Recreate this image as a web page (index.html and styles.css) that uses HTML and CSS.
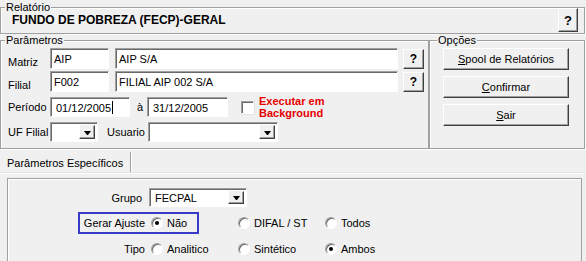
FILE: index.html
```html
<!DOCTYPE html>
<html lang="pt-BR">
<head>
    <meta charset="UTF-8">
    <title>Fundo de Pobreza (FECP) - Geral</title>
    <link rel="stylesheet" href="styles.css">
</head>
<body>
    <div class="window">
        <fieldset class="group group-report">
            <legend>Relatório</legend>
            <div class="report-row">
                <span class="report-title">FUNDO DE POBREZA (FECP)-GERAL</span>
                <button class="btn btn-help btn-help-lg">?</button>
            </div>
        </fieldset>

        <div class="main-row">
            <fieldset class="group group-params">
                <legend>Parâmetros</legend>
                <div class="params">
                    <div class="row row-tall">
                        <span class="lbl lbl-low">Matriz</span>
                        <div class="field w-code">AIP</div>
                        <div class="field w-name">AIP S/A</div>
                        <button class="btn btn-help">?</button>
                    </div>
                    <div class="row row-tall row-filial">
                        <span class="lbl lbl-low">Filial</span>
                        <div class="field w-code">F002</div>
                        <div class="field w-name">FILIAL AIP 002 S/A</div>
                        <button class="btn btn-help">?</button>
                    </div>
                    <div class="row row-periodo">
                        <span class="lbl">Período</span>
                        <div class="field field-date w-date">01/12/2005<span class="caret"></span></div>
                        <span class="lbl-a">à</span>
                        <div class="field field-date w-date2">31/12/2005</div>
                        <span class="check"></span>
                        <span class="background-text">Executar em<br>Background</span>
                    </div>
                    <div class="row row-uf">
                        <span class="lbl">UF Filial</span>
                        <div class="field combo w-uf"><span class="combo-text"></span><span class="drop"></span></div>
                        <span class="lbl-usuario">Usuario</span>
                        <div class="field combo w-usuario"><span class="combo-text"></span><span class="drop"></span></div>
                    </div>
                </div>
            </fieldset>

            <fieldset class="group group-options">
                <legend>Opções</legend>
                <div class="options">
                    <button class="btn btn-option"><u>S</u>pool de Relatórios</button>
                    <button class="btn btn-option"><u>C</u>onfirmar</button>
                    <button class="btn btn-option"><u>S</u>air</button>
                </div>
            </fieldset>
        </div>

        <div class="tabs">
            <span class="tab">Parâmetros Específicos</span>
        </div>

        <div class="tab-page">
            <div class="panel">
                <div class="spec-row spec-grupo">
                    <span class="spec-label">Grupo</span>
                    <div class="field combo w-grupo"><span class="combo-text">FECPAL</span><span class="drop"></span></div>
                </div>
                <div class="spec-row spec-ajuste">
                    <span class="spec-label">Gerar Ajuste</span>
                    <span class="opt"><span class="radio checked"></span>Não</span>
                    <span class="opt"><span class="radio"></span>DIFAL / ST</span>
                    <span class="opt"><span class="radio"></span>Todos</span>
                    <span class="mark"></span>
                </div>
                <div class="spec-row spec-tipo">
                    <span class="spec-label">Tipo</span>
                    <span class="opt"><span class="radio"></span>Analitico</span>
                    <span class="opt"><span class="radio"></span>Sintético</span>
                    <span class="opt"><span class="radio checked"></span>Ambos</span>
                </div>
            </div>
        </div>
    </div>
</body>
</html>
```

FILE: styles.css
```css
html, body {
    margin: 0;
    padding: 0;
    height: 261px;
    overflow: hidden;
}

body {
    background-color: #f0f0f0;
    font-family: "Liberation Sans", Arial, sans-serif;
    font-size: 11px;
    color: #000;
}

.window {
    width: 585px;
}

/* group boxes */
.group {
    margin: 0;
    padding: 0;
    min-width: 0;
    box-sizing: border-box;
    border: 1px solid #a0a0a0;
    box-shadow: 1px 1px 0 #fff, inset 1px 1px 0 #fff;
}

.group legend {
    padding: 0 1px;
    margin-left: 4px;
    line-height: 12px;
    background-color: #f0f0f0;
}

.group-report {
    margin-top: 1px;
    padding: 0 6px 1px 11px;
}

.group-report legend {
    margin-left: -7px;
}

.report-row {
    display: flex;
    align-items: center;
    height: 24px;
    margin-top: -5px;
}

.report-title {
    font-size: 12px;
    font-weight: bold;
}

.main-row {
    display: flex;
}

.group-params {
    width: 429px;
    padding: 2px 4px 6px 7px;
}

.group-options {
    width: 156px;
    padding: 2px 0 0 13px;
}

.group-options legend {
    margin-left: -6px;
}

.group-params legend {
    margin-left: -3px;
}

/* buttons */
.btn {
    font-family: inherit;
    font-size: 11px;
    color: #000;
    background-color: #f0f0f0;
    border: 1px solid;
    border-color: #fff #404040 #404040 #fff;
    box-shadow: inset -1px -1px 0 #a0a0a0;
    padding: 0;
    margin: 0;
}

.btn-help {
    width: 21px;
    height: 20px;
    margin-left: 5px;
    font-weight: bold;
    font-size: 12px;
}

.btn-help-lg {
    width: 20px;
    height: 24px;
    margin-left: auto;
    font-size: 13px;
}

.options {
    display: flex;
    flex-direction: column;
    gap: 6px;
}

.btn-option {
    width: 126px;
    height: 22px;
}

/* parameter rows */
.row {
    display: flex;
    align-items: center;
    height: 20px;
    margin-top: 5px;
}

.row-tall {
    height: 21px;
    margin-top: 0;
}

.row-filial {
    margin-top: 2px;
}

.lbl {
    width: 42px;
    flex-shrink: 0;
}

.lbl-low {
    align-self: flex-end;
    line-height: 13px;
}

.field {
    box-sizing: border-box;
    height: 100%;
    background-color: #fff;
    border: 1px solid;
    border-color: #a0a0a0 #fff #fff #a0a0a0;
    box-shadow: inset 1px 1px 0 #696969;
    padding: 1px 0 0 3px;
    display: flex;
    align-items: center;
    white-space: nowrap;
    flex-shrink: 0;
}

.w-code {
    width: 59px;
}

.w-name {
    width: 283px;
    margin-left: 6px;
}

.field-date {
    padding-left: 5px;
}

.w-date {
    width: 80px;
}

.w-date2 {
    width: 81px;
}

.caret {
    display: inline-block;
    width: 1px;
    height: 13px;
    background-color: #000;
    margin-left: 1px;
}

.lbl-a {
    margin: 0 4px 0 7px;
    width: 6px;
}

.check {
    box-sizing: border-box;
    width: 13px;
    height: 13px;
    margin-left: 13px;
    background-color: #fff;
    border: 1px solid;
    border-color: #a0a0a0 #fff #fff #a0a0a0;
    box-shadow: inset 1px 1px 0 #696969, 1px 1px 0 #e3e3e3;
    flex-shrink: 0;
}

.background-text {
    align-self: flex-start;
    margin: -2px 0 0 5px;
    line-height: 12px;
    color: #e60000;
    font-weight: bold;
    white-space: nowrap;
}

/* combo boxes */
.combo {
    padding: 2px 2px 2px 0;
    align-items: stretch;
}

.combo-text {
    flex: 1;
    display: flex;
    align-items: center;
    padding-left: 5px;
}

.drop {
    box-sizing: border-box;
    width: 16px;
    display: flex;
    align-items: center;
    justify-content: center;
    background-color: #f0f0f0;
    border: 1px solid;
    border-color: #f0f0f0 #404040 #404040 #fff;
    box-shadow: inset -1px -1px 0 #a0a0a0;
}

.drop::before {
    content: "";
    width: 1px;
    height: 0;
    border-left: 3px solid transparent;
    border-right: 3px solid transparent;
    border-top: 4px solid #000;
    margin-top: 1px;
}

.w-uf {
    width: 48px;
}

.lbl-usuario {
    width: 41px;
    margin-left: 9px;
    flex-shrink: 0;
}

.w-usuario {
    width: 130px;
}

/* tabs */
.tabs {
    display: flex;
    margin-top: 3px;
    height: 20px;
}

.tab {
    line-height: 22px;
    padding: 0 7px;
    border-right: 1px solid #a0a0a0;
    box-shadow: 1px 0 0 #fff;
}

.tab-page {
    margin-top: 1px;
    border-top: 1px solid #fff;
    box-shadow: 0 -1px 0 #e3e3e3;
    padding: 4px 3px 0 7px;
}

.panel {
    box-sizing: border-box;
    height: 83px;
    border: 1px solid #a0a0a0;
    border-bottom: 0;
    box-shadow: inset 1px 1px 0 #fff;
    padding-top: 9px;
}

.spec-row {
    position: relative;
    display: flex;
    align-items: center;
    height: 18px;
}

.spec-grupo {
    height: 19px;
}

.spec-ajuste {
    margin-top: 7px;
}

.spec-tipo {
    margin-top: 8px;
}

.spec-label {
    width: 137px;
    text-align: right;
    margin-right: 6px;
    flex-shrink: 0;
}

.spec-grupo .spec-label {
    width: 134px;
    margin-right: 7px;
}

.w-grupo {
    width: 98px;
}

.opt {
    width: 87px;
    display: flex;
    align-items: center;
    white-space: nowrap;
    flex-shrink: 0;
}

.radio {
    box-sizing: border-box;
    position: relative;
    width: 12px;
    height: 12px;
    margin-right: 4px;
    border-radius: 50%;
    background-color: #fff;
    border: 1px solid;
    border-color: #a0a0a0 #fff #fff #a0a0a0;
    box-shadow: inset 1px 1px 0 #696969;
    flex-shrink: 0;
}

.radio.checked::after {
    content: "";
    position: absolute;
    left: 3px;
    top: 3px;
    width: 4px;
    height: 4px;
    border-radius: 50%;
    background-color: #000;
}

/* highlight box drawn over the "Gerar Ajuste" option */
.mark {
    position: absolute;
    left: 70px;
    top: -2px;
    width: 121px;
    height: 22px;
    box-sizing: border-box;
    border: 2px solid #3a3ac8;
}
```
